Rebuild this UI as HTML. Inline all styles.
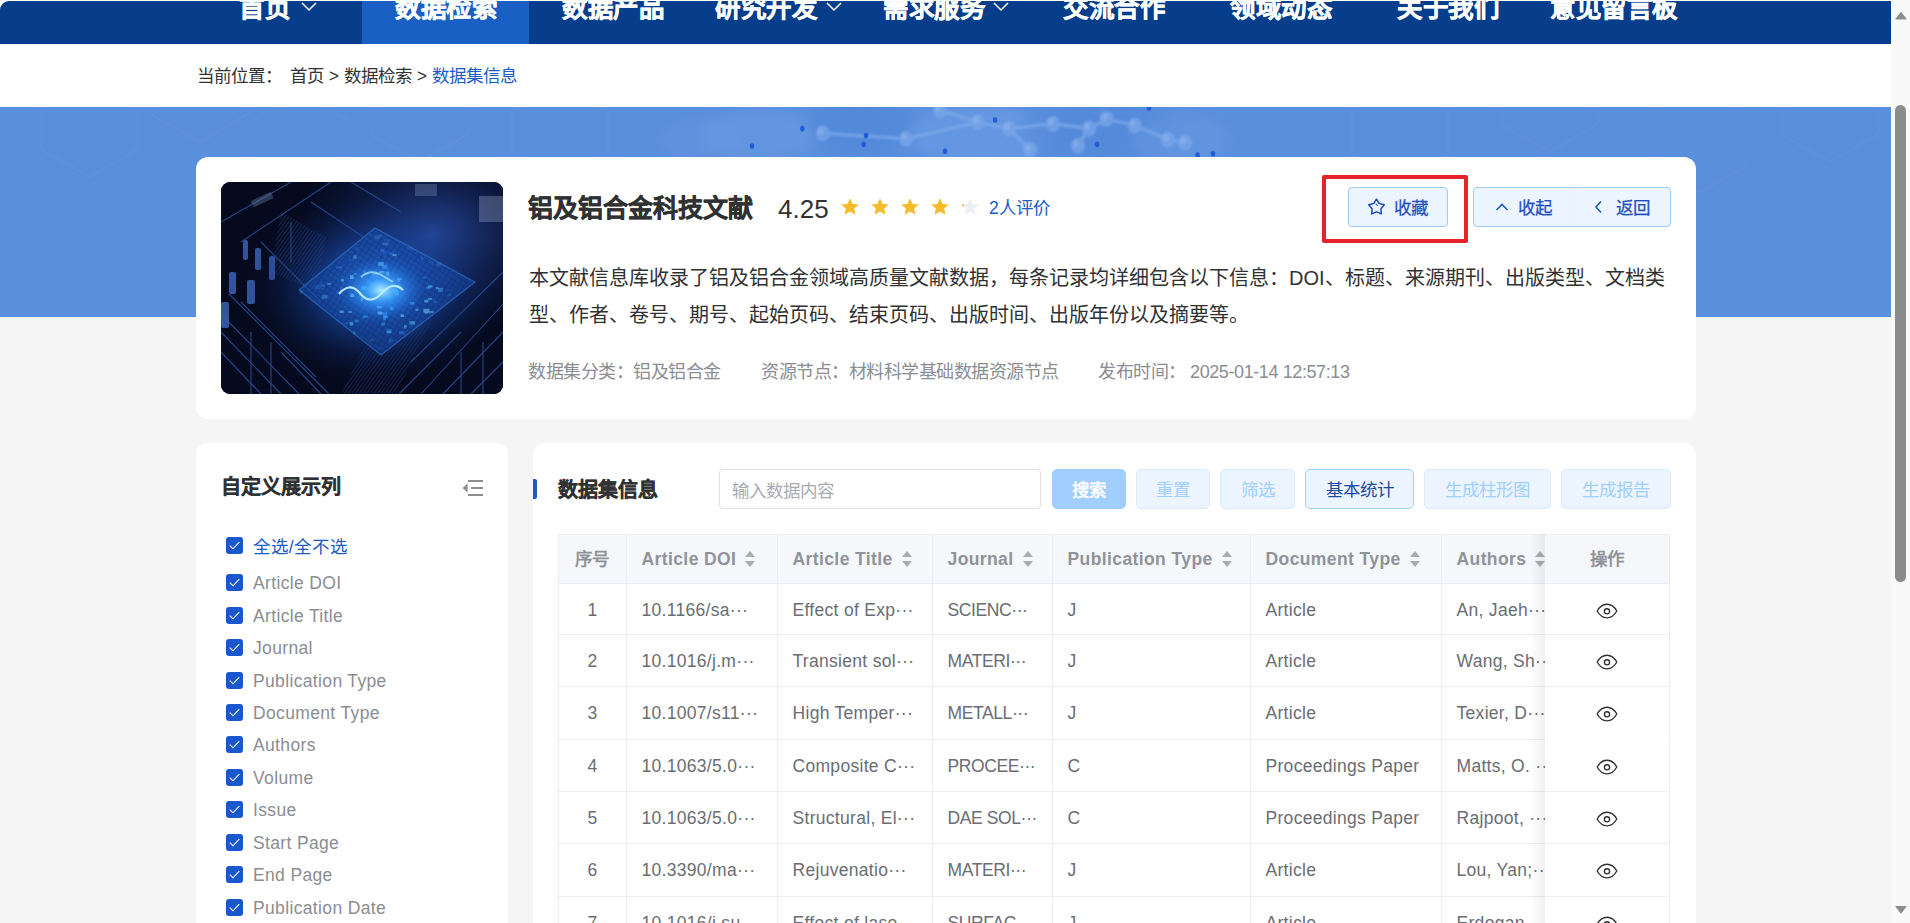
<!DOCTYPE html>
<html lang="zh-CN">
<head>
<meta charset="utf-8">
<style>
*{box-sizing:border-box;margin:0;padding:0}
html,body{width:1910px;height:923px;overflow:hidden;background:#f5f5f5;font-family:"Liberation Sans",sans-serif}
.abs{position:absolute}
#nav{left:0;top:1px;width:1891px;height:43px;background:#073e8c;border-top-left-radius:9px;overflow:hidden}
.ni{position:absolute;top:-13px;height:40px;line-height:40px;color:#fff;font-size:25.5px;letter-spacing:-0.5px;font-weight:bold;-webkit-text-stroke:0.45px #fff;white-space:nowrap}
.chev{position:absolute;top:1px;width:16px;height:10px}
#crumb{left:0;top:44px;width:1891px;height:63px;background:#fff}
#crumb .t{position:absolute;left:197px;top:21px;font-size:17.5px;line-height:22px;color:#333;white-space:nowrap}
#banner{left:0;top:107px;width:1891px;height:210px;background:#5a8fdc;overflow:hidden}
#card{left:196px;top:157px;width:1500px;height:262px;background:#fff;border-radius:12px}
#thumb{left:221px;top:182px;width:282px;height:212px;border-radius:9px;overflow:hidden;background:#050c22}
.title{left:528px;top:190.5px;font-size:25px;font-weight:bold;color:#303133;-webkit-text-stroke:0.4px #303133;line-height:34px;white-space:nowrap}
.score{left:778px;top:193.5px;font-size:26px;color:#303133;line-height:30px}
.star{position:absolute;top:197px;width:20px;height:20px}
.rev{left:989px;top:197px;font-size:17.5px;color:#1a5bc4;line-height:22px;white-space:nowrap}
#redbox{left:1322px;top:175px;width:146px;height:68px;border:4px solid #e6212a;border-radius:2px}
.btn{position:absolute;height:40px;border:1px solid #a3c9f5;background:#ecf5ff;border-radius:4px;color:#1d50bd;font-size:17.5px;line-height:40px;-webkit-text-stroke:0.25px #1d50bd;white-space:nowrap}
.desc{left:529px;top:259.5px;width:1150px;font-size:20px;line-height:37px;color:#303133}
.meta{position:absolute;top:360.5px;font-size:18px;letter-spacing:-0.5px;line-height:22px;color:#8a8d93;white-space:nowrap}
#lp{left:196px;top:443px;width:312px;height:520px;background:#fff;border-radius:12px}
#rp{left:533px;top:443px;width:1163px;height:520px;background:#fff;border-radius:12px}
.h2{position:absolute;font-size:20px;font-weight:bold;color:#303133;-webkit-text-stroke:0.3px #303133;line-height:26px;white-space:nowrap}
.cb{position:absolute;left:226px;width:17px;height:17px;background:#1858cc;border-radius:3px}
.cb svg{position:absolute;left:0;top:0}
.cl{position:absolute;left:253px;font-size:17.5px;line-height:23.4px;letter-spacing:0.35px;color:#8a8d93;white-space:nowrap}

.th{position:absolute;padding-left:14.5px;font-size:17.5px;font-weight:bold;color:#909399;line-height:50px;letter-spacing:0.4px;white-space:nowrap;border-left:1px solid #ebeef5}
.sort{display:inline-block;position:relative;width:11px;height:16px;margin-left:9px;vertical-align:-2px}
.sort:before{content:"";position:absolute;left:0;top:0;border-left:5.5px solid transparent;border-right:5.5px solid transparent;border-bottom:6px solid #a8abb2}
.sort:after{content:"";position:absolute;left:0;bottom:0;border-left:5.5px solid transparent;border-right:5.5px solid transparent;border-top:6px solid #a8abb2}
.td{position:absolute;padding-left:14.5px;font-size:17.5px;color:#6a6d73;line-height:52.5px;letter-spacing:0.3px;white-space:nowrap;overflow:hidden;border-left:1px solid #ebeef5;border-bottom:1px solid #ebeef5}
.tdf{position:absolute;left:1545px;width:125px;background:#fff;border-bottom:1px solid #ebeef5;border-right:1px solid #ebeef5;text-align:center;padding-top:19px}
.tdf svg{display:inline-block}
.tb{position:absolute;top:469px;height:40px;border:1px solid #d9ecff;background:#ecf5ff;border-radius:5px;font-size:17.5px;line-height:40px;text-align:center;white-space:nowrap}
#sb{left:1891px;top:0;width:19px;height:923px;background:#f9f9f9}
</style>
</head>
<body>
<div class="abs" style="left:0;top:0;width:1891px;height:44px;background:#fff"></div>
<!-- NAV -->
<div id="nav" class="abs">
  <div class="abs" style="left:362px;top:0;width:167px;height:43px;background:#1a5fc3"></div>
  <div class="ni" style="left:239px">首页</div>
  <svg class="chev" style="left:301px" viewBox="0 0 16 10"><path d="M1 1 L8 8 L15 1" fill="none" stroke="#fff" stroke-width="1.5"/></svg>
  <div class="ni" style="left:395px">数据检索</div>
  <div class="ni" style="left:562px">数据产品</div>
  <div class="ni" style="left:715px">研究开发</div>
  <svg class="chev" style="left:826px" viewBox="0 0 16 10"><path d="M1 1 L8 8 L15 1" fill="none" stroke="#fff" stroke-width="1.5"/></svg>
  <div class="ni" style="left:883px">需求服务</div>
  <svg class="chev" style="left:993px" viewBox="0 0 16 10"><path d="M1 1 L8 8 L15 1" fill="none" stroke="#fff" stroke-width="1.5"/></svg>
  <div class="ni" style="left:1063px">交流合作</div>
  <div class="ni" style="left:1230px">领域动态</div>
  <div class="ni" style="left:1397px">关于我们</div>
  <div class="ni" style="left:1550px">意见留言板</div>
</div>
<!-- CRUMB -->
<div id="crumb" class="abs"><div class="t">当前位置：<span style="display:inline-block;width:8px"></span>首页 &gt; 数据检索 &gt; <span style="color:#1a5bc4">数据集信息</span></div></div>
<!-- BANNER -->
<div id="banner" class="abs"><svg class="abs" style="left:0;top:0" width="1891" height="210" viewBox="0 0 1891 210"><defs><filter id="bl" x="-50%" y="-50%" width="200%" height="200%"><feGaussianBlur stdDeviation="6"/></filter><filter id="bl2"><feGaussianBlur stdDeviation="0.8"/></filter></defs><ellipse cx="760" cy="28" rx="60" ry="25" fill="#6b9ce4" opacity="0.5" filter="url(#bl)"/><ellipse cx="860" cy="18" rx="50" ry="30" fill="#4d84d8" opacity="0.5" filter="url(#bl)"/><ellipse cx="980" cy="28" rx="70" ry="30" fill="#72a2e8" opacity="0.45" filter="url(#bl)"/><ellipse cx="1100" cy="23" rx="80" ry="30" fill="#4f86d9" opacity="0.45" filter="url(#bl)"/><ellipse cx="1180" cy="33" rx="50" ry="25" fill="#6d9de5" opacity="0.4" filter="url(#bl)"/><ellipse cx="700" cy="33" rx="40" ry="20" fill="#6a9ae3" opacity="0.35" filter="url(#bl)"/><polygon points="138,42 90,70 42,43 42,-12 90,-40 138,-12" fill="none" stroke="#7aa3e6" stroke-width="1" opacity="0.3"/><polygon points="248,7 200,35 152,8 152,-47 200,-75 248,-47" fill="none" stroke="#7aa3e6" stroke-width="1" opacity="0.3"/><polygon points="348,68 300,95 252,68 252,13 300,-15 348,13" fill="none" stroke="#7aa3e6" stroke-width="1" opacity="0.3"/><polygon points="468,27 420,55 372,28 372,-27 420,-55 468,-27" fill="none" stroke="#7aa3e6" stroke-width="1" opacity="0.3"/><polygon points="608,58 560,85 512,58 512,3 560,-25 608,3" fill="none" stroke="#7aa3e6" stroke-width="1" opacity="0.3"/><polygon points="1448,48 1400,75 1352,48 1352,-7 1400,-35 1448,-7" fill="none" stroke="#7aa3e6" stroke-width="1" opacity="0.3"/><polygon points="1598,17 1550,45 1502,18 1502,-37 1550,-65 1598,-37" fill="none" stroke="#7aa3e6" stroke-width="1" opacity="0.3"/><polygon points="1748,58 1700,85 1652,58 1652,3 1700,-25 1748,3" fill="none" stroke="#7aa3e6" stroke-width="1" opacity="0.3"/><polygon points="1878,27 1830,55 1782,28 1782,-27 1830,-55 1878,-27" fill="none" stroke="#7aa3e6" stroke-width="1" opacity="0.3"/><g opacity="0.75" filter="url(#bl2)"><line x1="822.8" y1="26.30000000000001" x2="906" y2="31.80000000000001" stroke="#7ba8ea" stroke-width="3.5"/><line x1="906" y1="31.80000000000001" x2="977.7" y2="15.299999999999997" stroke="#7ba8ea" stroke-width="3.5"/><line x1="977.7" y1="15.299999999999997" x2="1009" y2="21.599999999999994" stroke="#7ba8ea" stroke-width="3.5"/><line x1="1009" y1="21.599999999999994" x2="1053" y2="16.799999999999997" stroke="#7ba8ea" stroke-width="3.5"/><line x1="1053" y1="16.799999999999997" x2="1089" y2="21.599999999999994" stroke="#7ba8ea" stroke-width="3.5"/><line x1="1089" y1="21.599999999999994" x2="1106.5" y2="12" stroke="#7ba8ea" stroke-width="3.5"/><line x1="1106.5" y1="12" x2="1134.8" y2="18.400000000000006" stroke="#7ba8ea" stroke-width="3.5"/><line x1="1134.8" y1="18.400000000000006" x2="1167.7" y2="32.599999999999994" stroke="#7ba8ea" stroke-width="3.5"/><line x1="1167.7" y1="32.599999999999994" x2="1185" y2="35.69999999999999" stroke="#7ba8ea" stroke-width="3.5"/><line x1="1089" y1="21.599999999999994" x2="1078" y2="38.80000000000001" stroke="#7ba8ea" stroke-width="3.5"/><line x1="977.7" y1="15.299999999999997" x2="940" y2="3" stroke="#7ba8ea" stroke-width="3.5"/><line x1="1009" y1="21.599999999999994" x2="1030" y2="43" stroke="#7ba8ea" stroke-width="3.5"/><ellipse cx="822.8" cy="26.30000000000001" rx="7" ry="8" fill="#79a6ea"/><ellipse cx="820.8" cy="24.30000000000001" rx="3" ry="3.5" fill="#8fb6ef"/><ellipse cx="906" cy="31.80000000000001" rx="7" ry="8" fill="#79a6ea"/><ellipse cx="904" cy="29.80000000000001" rx="3" ry="3.5" fill="#8fb6ef"/><ellipse cx="977.7" cy="15.299999999999997" rx="7" ry="8" fill="#79a6ea"/><ellipse cx="975.7" cy="13.299999999999997" rx="3" ry="3.5" fill="#8fb6ef"/><ellipse cx="1009" cy="21.599999999999994" rx="7" ry="8" fill="#79a6ea"/><ellipse cx="1007" cy="19.599999999999994" rx="3" ry="3.5" fill="#8fb6ef"/><ellipse cx="1053" cy="16.799999999999997" rx="7" ry="8" fill="#79a6ea"/><ellipse cx="1051" cy="14.799999999999997" rx="3" ry="3.5" fill="#8fb6ef"/><ellipse cx="1089" cy="21.599999999999994" rx="7" ry="8" fill="#79a6ea"/><ellipse cx="1087" cy="19.599999999999994" rx="3" ry="3.5" fill="#8fb6ef"/><ellipse cx="1106.5" cy="12" rx="7" ry="8" fill="#79a6ea"/><ellipse cx="1104.5" cy="10" rx="3" ry="3.5" fill="#8fb6ef"/><ellipse cx="1134.8" cy="18.400000000000006" rx="7" ry="8" fill="#79a6ea"/><ellipse cx="1132.8" cy="16.400000000000006" rx="3" ry="3.5" fill="#8fb6ef"/><ellipse cx="1167.7" cy="32.599999999999994" rx="7" ry="8" fill="#79a6ea"/><ellipse cx="1165.7" cy="30.599999999999994" rx="3" ry="3.5" fill="#8fb6ef"/><ellipse cx="1185" cy="35.69999999999999" rx="7" ry="8" fill="#79a6ea"/><ellipse cx="1183" cy="33.69999999999999" rx="3" ry="3.5" fill="#8fb6ef"/><ellipse cx="1078" cy="38.80000000000001" rx="7" ry="8" fill="#79a6ea"/><ellipse cx="1076" cy="36.80000000000001" rx="3" ry="3.5" fill="#8fb6ef"/><ellipse cx="940" cy="3" rx="7" ry="8" fill="#79a6ea"/><ellipse cx="938" cy="1" rx="3" ry="3.5" fill="#8fb6ef"/><ellipse cx="1030" cy="43" rx="7" ry="8" fill="#79a6ea"/><ellipse cx="1028" cy="41" rx="3" ry="3.5" fill="#8fb6ef"/></g><ellipse cx="802.3" cy="21.599999999999994" rx="2.2" ry="2.8" fill="#1f5bd6"/><ellipse cx="752" cy="39" rx="2.2" ry="2.8" fill="#1f5bd6"/><ellipse cx="866" cy="28.599999999999994" rx="2.2" ry="2.8" fill="#1f5bd6"/><ellipse cx="863.6" cy="37.30000000000001" rx="2.2" ry="2.8" fill="#1f5bd6"/><ellipse cx="945" cy="44.30000000000001" rx="2.2" ry="2.8" fill="#1f5bd6"/><ellipse cx="995" cy="13" rx="2.2" ry="2.8" fill="#1f5bd6"/><ellipse cx="1097" cy="37.30000000000001" rx="2.2" ry="2.8" fill="#1f5bd6"/><ellipse cx="1149" cy="1" rx="2.2" ry="2.8" fill="#1f5bd6"/><ellipse cx="1213" cy="46.69999999999999" rx="2.2" ry="2.8" fill="#1f5bd6"/><ellipse cx="1197.6" cy="48" rx="2.2" ry="2.8" fill="#1f5bd6"/></svg></div>
<!-- CARD -->
<div id="card" class="abs"></div>
<div id="thumb" class="abs"><svg width="282" height="212" viewBox="0 0 282 212">
<defs>
<radialGradient id="g1" cx="0.55" cy="0.5" r="0.45"><stop offset="0" stop-color="#2f90f2" stop-opacity="0.95"/><stop offset="0.45" stop-color="#1a4cae" stop-opacity="0.6"/><stop offset="1" stop-color="#0a1a4a" stop-opacity="0"/></radialGradient>
<radialGradient id="g2" cx="0.75" cy="0.25" r="0.5"><stop offset="0" stop-color="#2a4ea6" stop-opacity="0.95"/><stop offset="1" stop-color="#0a1a4a" stop-opacity="0"/></radialGradient>
<radialGradient id="g3" cx="0.5" cy="0.5" r="0.5"><stop offset="0" stop-color="#a8ecff"/><stop offset="0.35" stop-color="#3aa0ff" stop-opacity="0.85"/><stop offset="1" stop-color="#1a5fd0" stop-opacity="0"/></radialGradient>
<pattern id="pt" width="5" height="5" patternUnits="userSpaceOnUse" patternTransform="rotate(33)"><path d="M0 0 H5 M0 0 V5" stroke="#0a2260" stroke-width="1.1"/></pattern>
<pattern id="pl" width="3" height="3" patternUnits="userSpaceOnUse" patternTransform="rotate(-55)"><path d="M0 0 H3" stroke="#3c64b8" stroke-width="0.9"/></pattern>
<filter id="tb"><feGaussianBlur stdDeviation="0.6"/></filter>
</defs>
<rect width="282" height="212" fill="#050a1e"/>
<rect width="282" height="212" fill="url(#g2)"/>
<g stroke="#2e55a0" stroke-width="1.1" opacity="0.8" filter="url(#tb)">
<path d="M0 150 L60 212 M0 132 L78 212 M0 170 L40 212 M8 112 L108 212 M40 60 L100 120 M60 170 L100 212 M20 120 L95 195"/>
<path d="M200 212 L282 122 M222 212 L282 150 M178 212 L240 150 M250 212 L282 180 M190 180 L282 90"/>
<path d="M0 40 L70 0 M20 60 L110 0 M130 0 L180 30 M90 20 L150 60"/>
<path d="M30 212 L30 150 M50 212 L50 160 M240 212 L240 170 M262 212 L262 160 M70 80 L70 40"/>
</g>
<polygon points="60,30 105,55 95,110 50,90" fill="url(#pl)" opacity="0.7"/>
<polygon points="150,150 210,140 175,212 120,212" fill="url(#pl)" opacity="0.6"/>
<g fill="#3a62b4" opacity="0.85"><rect x="22" y="58" width="5" height="20" rx="2"/><rect x="34" y="66" width="6" height="22" rx="2"/><rect x="48" y="74" width="6" height="24" rx="2"/><rect x="8" y="90" width="7" height="22" rx="2"/><rect x="26" y="98" width="8" height="24" rx="2"/><rect x="0" y="120" width="8" height="26" rx="2"/></g>
<g fill="#7d8fb3" opacity="0.35"><rect x="30" y="14" width="22" height="7" transform="rotate(-25 41 17)"/><rect x="194" y="2" width="22" height="12"/></g>
<rect x="258" y="14" width="24" height="26" fill="#8796b8" opacity="0.4"/>
<rect width="282" height="212" fill="url(#g1)"/>
<polygon points="154,46 254,100 160,173 78,108" fill="#1a56bf" opacity="0.45"/>
<polygon points="154,46 254,100 160,173 78,108" fill="url(#pt)" opacity="0.55"/>
<polygon points="154,46 254,100 160,173 78,108" fill="none" stroke="#3d8ae0" stroke-width="1.2" opacity="0.5"/>
<g><rect x="135.0" y="65.2" width="2.3" height="2.8" fill="#3b9cff" opacity="0.25"/><rect x="154.3" y="54.9" width="4.2" height="1.6" fill="#3b9cff" opacity="0.15"/><rect x="189.0" y="120.0" width="4.3" height="2.5" fill="#3b9cff" opacity="0.72"/><rect x="132.3" y="149.6" width="2.4" height="2.9" fill="#5ec4ff" opacity="0.26"/><rect x="203.3" y="117.7" width="4.0" height="2.8" fill="#5ec4ff" opacity="0.56"/><rect x="214.8" y="105.1" width="3.4" height="2.1" fill="#7fd6ff" opacity="0.40"/><rect x="165.1" y="89.6" width="3.2" height="4.0" fill="#7fd6ff" opacity="0.80"/><rect x="98.8" y="99.1" width="2.6" height="2.7" fill="#2a78e0" opacity="0.25"/><rect x="212.6" y="118.8" width="3.4" height="2.4" fill="#2a78e0" opacity="0.41"/><rect x="165.4" y="147.2" width="5.4" height="3.9" fill="#3b9cff" opacity="0.44"/><rect x="161.4" y="130.3" width="4.9" height="2.3" fill="#3b9cff" opacity="0.75"/><rect x="179.7" y="132.5" width="3.1" height="2.5" fill="#7fd6ff" opacity="0.66"/><rect x="159.3" y="67.3" width="4.0" height="2.0" fill="#3b9cff" opacity="0.41"/><rect x="128.6" y="139.8" width="3.6" height="3.7" fill="#7fd6ff" opacity="0.44"/><rect x="92.2" y="103.0" width="5.5" height="3.5" fill="#2a78e0" opacity="0.15"/><rect x="151.1" y="91.6" width="5.8" height="1.9" fill="#7fd6ff" opacity="0.81"/><rect x="119.1" y="107.6" width="3.1" height="1.5" fill="#5ec4ff" opacity="0.62"/><rect x="151.7" y="92.9" width="5.8" height="3.2" fill="#2a78e0" opacity="0.82"/><rect x="168.7" y="124.4" width="3.8" height="3.7" fill="#3b9cff" opacity="0.81"/><rect x="176.4" y="96.6" width="2.4" height="3.1" fill="#7fd6ff" opacity="0.82"/><rect x="186.1" y="64.9" width="5.8" height="3.0" fill="#2a78e0" opacity="0.24"/><rect x="161.5" y="60.6" width="6.0" height="2.7" fill="#7fd6ff" opacity="0.24"/><rect x="163.2" y="56.9" width="5.0" height="3.4" fill="#3b9cff" opacity="0.15"/><rect x="162.2" y="133.9" width="2.8" height="3.9" fill="#3b9cff" opacity="0.70"/><rect x="141.7" y="133.6" width="5.0" height="2.2" fill="#3b9cff" opacity="0.65"/><rect x="226.8" y="111.8" width="3.4" height="2.1" fill="#5ec4ff" opacity="0.15"/><rect x="173.3" y="109.8" width="4.5" height="3.5" fill="#5ec4ff" opacity="0.87"/><rect x="120.1" y="96.9" width="2.8" height="2.7" fill="#5ec4ff" opacity="0.60"/><rect x="217.1" y="106.0" width="4.8" height="3.9" fill="#5ec4ff" opacity="0.36"/><rect x="156.7" y="165.0" width="5.8" height="2.4" fill="#2a78e0" opacity="0.15"/><rect x="225.9" y="106.9" width="5.2" height="1.7" fill="#2a78e0" opacity="0.18"/><rect x="162.1" y="68.7" width="2.3" height="3.9" fill="#2a78e0" opacity="0.44"/><rect x="205.0" y="104.8" width="4.9" height="1.9" fill="#3b9cff" opacity="0.56"/><rect x="139.7" y="115.7" width="2.1" height="3.5" fill="#5ec4ff" opacity="0.81"/><rect x="115.4" y="109.6" width="3.0" height="2.5" fill="#2a78e0" opacity="0.57"/><rect x="140.3" y="104.2" width="5.3" height="3.7" fill="#7fd6ff" opacity="0.83"/><rect x="167.9" y="156.8" width="4.4" height="3.4" fill="#5ec4ff" opacity="0.18"/><rect x="171.4" y="107.3" width="5.5" height="1.6" fill="#3b9cff" opacity="0.88"/><rect x="95.2" y="103.4" width="5.0" height="3.8" fill="#3b9cff" opacity="0.19"/><rect x="156.0" y="123.8" width="4.8" height="2.6" fill="#5ec4ff" opacity="0.82"/><rect x="171.9" y="106.7" width="4.8" height="3.7" fill="#5ec4ff" opacity="0.88"/><rect x="99.4" y="102.1" width="4.7" height="2.6" fill="#3b9cff" opacity="0.28"/><rect x="115.4" y="84.5" width="5.6" height="1.9" fill="#3b9cff" opacity="0.40"/><rect x="204.0" y="129.9" width="3.0" height="1.8" fill="#5ec4ff" opacity="0.44"/><rect x="160.3" y="140.8" width="3.6" height="2.7" fill="#3b9cff" opacity="0.58"/><rect x="106.4" y="100.8" width="3.4" height="2.0" fill="#7fd6ff" opacity="0.41"/><rect x="134.1" y="137.7" width="3.4" height="2.6" fill="#3b9cff" opacity="0.53"/><rect x="201.8" y="94.8" width="4.0" height="1.7" fill="#2a78e0" opacity="0.56"/><rect x="215.1" y="80.3" width="5.3" height="3.6" fill="#5ec4ff" opacity="0.17"/><rect x="149.4" y="114.1" width="4.8" height="1.7" fill="#7fd6ff" opacity="0.87"/><rect x="152.9" y="55.2" width="4.5" height="3.5" fill="#3b9cff" opacity="0.15"/><rect x="157.9" y="89.1" width="5.7" height="2.2" fill="#7fd6ff" opacity="0.79"/><rect x="100.7" y="112.9" width="5.8" height="3.9" fill="#5ec4ff" opacity="0.31"/><rect x="171.5" y="72.1" width="4.0" height="1.9" fill="#7fd6ff" opacity="0.50"/><rect x="207.0" y="116.0" width="4.1" height="2.1" fill="#5ec4ff" opacity="0.51"/><rect x="156.7" y="129.6" width="4.6" height="2.9" fill="#7fd6ff" opacity="0.76"/><rect x="132.2" y="73.3" width="3.4" height="3.6" fill="#5ec4ff" opacity="0.41"/><rect x="202.4" y="126.8" width="6.0" height="4.0" fill="#7fd6ff" opacity="0.50"/><rect x="153.8" y="53.0" width="5.5" height="3.2" fill="#7fd6ff" opacity="0.15"/><rect x="127.6" y="76.8" width="2.2" height="2.0" fill="#2a78e0" opacity="0.44"/><rect x="142.1" y="87.8" width="3.0" height="3.9" fill="#2a78e0" opacity="0.73"/><rect x="132.5" y="91.3" width="3.3" height="1.7" fill="#3b9cff" opacity="0.69"/><rect x="127.1" y="129.3" width="4.0" height="1.5" fill="#5ec4ff" opacity="0.58"/><rect x="148.3" y="51.3" width="3.2" height="3.1" fill="#3b9cff" opacity="0.15"/><rect x="183.0" y="143.1" width="2.6" height="3.3" fill="#7fd6ff" opacity="0.45"/><rect x="188.4" y="139.2" width="5.6" height="3.4" fill="#5ec4ff" opacity="0.48"/><rect x="178.1" y="149.2" width="5.3" height="3.0" fill="#3b9cff" opacity="0.34"/><rect x="200.0" y="75.2" width="2.2" height="3.1" fill="#3b9cff" opacity="0.31"/><rect x="157.4" y="52.4" width="4.5" height="3.2" fill="#3b9cff" opacity="0.15"/><rect x="166.5" y="114.0" width="5.0" height="2.7" fill="#3b9cff" opacity="0.88"/><rect x="118.6" y="128.5" width="4.0" height="2.5" fill="#7fd6ff" opacity="0.49"/><rect x="162.3" y="132.8" width="4.5" height="3.1" fill="#3b9cff" opacity="0.72"/><rect x="122.7" y="140.4" width="4.5" height="1.8" fill="#2a78e0" opacity="0.36"/><rect x="162.9" y="107.7" width="4.8" height="3.2" fill="#3b9cff" opacity="0.90"/><rect x="129.2" y="111.6" width="3.9" height="3.4" fill="#7fd6ff" opacity="0.74"/><rect x="161.2" y="82.8" width="5.3" height="3.9" fill="#3b9cff" opacity="0.71"/><rect x="157.1" y="80.1" width="5.7" height="3.8" fill="#5ec4ff" opacity="0.67"/><rect x="209.6" y="79.2" width="2.5" height="3.6" fill="#2a78e0" opacity="0.25"/><rect x="167.5" y="158.6" width="2.9" height="3.7" fill="#2a78e0" opacity="0.15"/><rect x="78.6" y="108.4" width="3.6" height="3.3" fill="#7fd6ff" opacity="0.15"/><rect x="151.2" y="93.8" width="5.4" height="1.5" fill="#3b9cff" opacity="0.83"/><rect x="129.0" y="93.3" width="3.6" height="3.7" fill="#7fd6ff" opacity="0.68"/><rect x="194.5" y="126.6" width="3.0" height="2.2" fill="#5ec4ff" opacity="0.60"/><rect x="167.9" y="70.1" width="5.1" height="2.6" fill="#2a78e0" opacity="0.46"/><rect x="148.4" y="157.2" width="4.9" height="1.6" fill="#5ec4ff" opacity="0.16"/><rect x="206.9" y="103.3" width="4.6" height="2.2" fill="#5ec4ff" opacity="0.53"/><rect x="100.4" y="106.0" width="3.1" height="2.1" fill="#2a78e0" opacity="0.31"/><rect x="208.0" y="128.9" width="4.6" height="2.3" fill="#7fd6ff" opacity="0.39"/><rect x="176.1" y="96.1" width="4.6" height="1.7" fill="#5ec4ff" opacity="0.81"/><rect x="166.1" y="149.1" width="3.8" height="2.3" fill="#5ec4ff" opacity="0.39"/></g><ellipse cx="160" cy="108" rx="44" ry="32" fill="url(#g3)"/>
<path d="M118 112 Q128 100 138 110 Q148 124 160 112 Q172 98 182 108" fill="none" stroke="#c4f2ff" stroke-width="2.2" opacity="0.9"/>
<path d="M140 95 Q150 86 162 94 L172 100" fill="none" stroke="#aee8ff" stroke-width="1.8" opacity="0.75"/>
</svg></div>
<div class="abs title">铝及铝合金科技文献</div>
<div class="abs score">4.25</div>
<svg class="star" style="left:840px" viewBox="0 0 20 20"><path d="M10 1.2 L12.6 6.9 L18.8 7.5 L14.1 11.6 L15.5 17.7 L10 14.5 L4.5 17.7 L5.9 11.6 L1.2 7.5 L7.4 6.9 Z" fill="#f7ba2a"/></svg><svg class="star" style="left:870px" viewBox="0 0 20 20"><path d="M10 1.2 L12.6 6.9 L18.8 7.5 L14.1 11.6 L15.5 17.7 L10 14.5 L4.5 17.7 L5.9 11.6 L1.2 7.5 L7.4 6.9 Z" fill="#f7ba2a"/></svg><svg class="star" style="left:900px" viewBox="0 0 20 20"><path d="M10 1.2 L12.6 6.9 L18.8 7.5 L14.1 11.6 L15.5 17.7 L10 14.5 L4.5 17.7 L5.9 11.6 L1.2 7.5 L7.4 6.9 Z" fill="#f7ba2a"/></svg><svg class="star" style="left:930px" viewBox="0 0 20 20"><path d="M10 1.2 L12.6 6.9 L18.8 7.5 L14.1 11.6 L15.5 17.7 L10 14.5 L4.5 17.7 L5.9 11.6 L1.2 7.5 L7.4 6.9 Z" fill="#f7ba2a"/></svg><svg class="star" style="left:960px" viewBox="0 0 20 20"><defs><clipPath id="cp"><rect x="0" y="0" width="4" height="20"/></clipPath></defs><path d="M10 1.2 L12.6 6.9 L18.8 7.5 L14.1 11.6 L15.5 17.7 L10 14.5 L4.5 17.7 L5.9 11.6 L1.2 7.5 L7.4 6.9 Z" fill="#eceff4"/><path clip-path="url(#cp)" d="M10 1.2 L12.6 6.9 L18.8 7.5 L14.1 11.6 L15.5 17.7 L10 14.5 L4.5 17.7 L5.9 11.6 L1.2 7.5 L7.4 6.9 Z" fill="#f7ba2a"/></svg>
<div class="abs rev">2人评价</div>
<div id="redbox" class="abs"></div>
<div class="btn" style="left:1348px;top:187px;width:100px"><svg class="abs" style="left:18px;top:9px" width="19" height="19" viewBox="0 0 20 20"><path d="M10.00 2.20 L12.88 6.84 L18.18 8.14 L14.66 12.31 L15.05 17.76 L10.00 15.70 L4.95 17.76 L5.34 12.31 L1.82 8.14 L7.12 6.84 Z" fill="none" stroke="#1d50bd" stroke-width="1.6" stroke-linejoin="round"/><path d="M9.6 7.6 L11 9" stroke="#1d50bd" stroke-width="1.1" stroke-linecap="round"/></svg><span class="abs" style="left:45px;top:0">收藏</span></div>
<div class="btn" style="left:1473px;top:187px;width:198px"><div class="abs" style="left:100px;top:0;width:1px;height:38px;background:#e8f2fd"></div><svg class="abs" style="left:21px;top:14px" width="14" height="10" viewBox="0 0 14 10"><path d="M1.5 8 L7 2.5 L12.5 8" fill="none" stroke="#1a5bc4" stroke-width="1.6"/></svg><span class="abs" style="left:44px;top:0">收起</span><svg class="abs" style="left:120px;top:12px" width="9" height="14" viewBox="0 0 9 14"><path d="M7 1.5 L2 7 L7 12.5" fill="none" stroke="#1a5bc4" stroke-width="1.6"/></svg><span class="abs" style="left:142px;top:0">返回</span></div>
<div class="abs desc">本文献信息库收录了铝及铝合金领域高质量文献数据，每条记录均详细包含以下信息：DOI、标题、来源期刊、出版类型、文档类型、作者、卷号、期号、起始页码、结束页码、出版时间、出版年份以及摘要等。</div>
<div class="meta" style="left:528px">数据集分类：铝及铝合金</div>
<div class="meta" style="left:761px">资源节点：材料科学基础数据资源节点</div>
<div class="meta" style="left:1098px">发布时间：&nbsp;<span style="letter-spacing:-0.4px">2025-01-14 12:57:13</span></div>
<!-- LEFT PANEL -->
<div id="lp" class="abs"></div>
<div class="h2" style="left:220.5px;top:473.5px">自定义展示列</div>
<svg class="abs" style="left:462px;top:480px" width="22" height="17" viewBox="0 0 22 17"><path d="M6 1 H21 M9 8 H21 M6 15 H21" stroke="#8f8f8f" stroke-width="1.8"/><path d="M0.6 8 L5.6 3.2 V12.8 Z" fill="#8f8f8f"/></svg>
<div class="cb" style="top:537px"><svg width="17" height="17" viewBox="0 0 17 17"><path d="M3.8 8.6 L7 11.8 L13.3 5.2" fill="none" stroke="#fff" stroke-width="1.1"/></svg></div><div class="cl" style="top:535.7px;color:#1a5bc4;letter-spacing:0.85px">全选/全不选</div>
<div class="cb" style="top:574.1px"><svg width="17" height="17" viewBox="0 0 17 17"><path d="M3.8 8.6 L7 11.8 L13.3 5.2" fill="none" stroke="#fff" stroke-width="1.1"/></svg></div><div class="cl" style="top:572.1px">Article DOI</div>
<div class="cb" style="top:606.6px"><svg width="17" height="17" viewBox="0 0 17 17"><path d="M3.8 8.6 L7 11.8 L13.3 5.2" fill="none" stroke="#fff" stroke-width="1.1"/></svg></div><div class="cl" style="top:604.6px">Article Title</div>
<div class="cb" style="top:639.0px"><svg width="17" height="17" viewBox="0 0 17 17"><path d="M3.8 8.6 L7 11.8 L13.3 5.2" fill="none" stroke="#fff" stroke-width="1.1"/></svg></div><div class="cl" style="top:637.0px">Journal</div>
<div class="cb" style="top:671.5px"><svg width="17" height="17" viewBox="0 0 17 17"><path d="M3.8 8.6 L7 11.8 L13.3 5.2" fill="none" stroke="#fff" stroke-width="1.1"/></svg></div><div class="cl" style="top:669.5px">Publication Type</div>
<div class="cb" style="top:703.9px"><svg width="17" height="17" viewBox="0 0 17 17"><path d="M3.8 8.6 L7 11.8 L13.3 5.2" fill="none" stroke="#fff" stroke-width="1.1"/></svg></div><div class="cl" style="top:701.9px">Document Type</div>
<div class="cb" style="top:736.4px"><svg width="17" height="17" viewBox="0 0 17 17"><path d="M3.8 8.6 L7 11.8 L13.3 5.2" fill="none" stroke="#fff" stroke-width="1.1"/></svg></div><div class="cl" style="top:734.4px">Authors</div>
<div class="cb" style="top:768.8px"><svg width="17" height="17" viewBox="0 0 17 17"><path d="M3.8 8.6 L7 11.8 L13.3 5.2" fill="none" stroke="#fff" stroke-width="1.1"/></svg></div><div class="cl" style="top:766.8px">Volume</div>
<div class="cb" style="top:801.2px"><svg width="17" height="17" viewBox="0 0 17 17"><path d="M3.8 8.6 L7 11.8 L13.3 5.2" fill="none" stroke="#fff" stroke-width="1.1"/></svg></div><div class="cl" style="top:799.2px">Issue</div>
<div class="cb" style="top:833.7px"><svg width="17" height="17" viewBox="0 0 17 17"><path d="M3.8 8.6 L7 11.8 L13.3 5.2" fill="none" stroke="#fff" stroke-width="1.1"/></svg></div><div class="cl" style="top:831.7px">Start Page</div>
<div class="cb" style="top:866.2px"><svg width="17" height="17" viewBox="0 0 17 17"><path d="M3.8 8.6 L7 11.8 L13.3 5.2" fill="none" stroke="#fff" stroke-width="1.1"/></svg></div><div class="cl" style="top:864.2px">End Page</div>
<div class="cb" style="top:898.6px"><svg width="17" height="17" viewBox="0 0 17 17"><path d="M3.8 8.6 L7 11.8 L13.3 5.2" fill="none" stroke="#fff" stroke-width="1.1"/></svg></div><div class="cl" style="top:896.6px">Publication Date</div>
<!-- RIGHT PANEL -->
<div id="rp" class="abs"></div>
<div class="abs" style="left:533px;top:479px;width:4px;height:20px;background:#1a5bc4;border-radius:0 2px 2px 0"></div>
<div class="h2" style="left:558px;top:477px">数据集信息</div>
<div class="abs" style="left:719px;top:469px;width:322px;height:40px;border:1px solid #dcdfe6;border-radius:4px;background:#fff"><span class="abs" style="left:12px;top:10.4px;font-size:17.5px;line-height:22px;color:#a8abb2;white-space:nowrap">输入数据内容</span></div>
<div class="tb" style="left:1052px;width:74px;background:#a0cfff;border-color:#a0cfff;color:#fff;font-weight:bold">搜索</div>
<div class="tb" style="left:1136px;width:74px;color:#a0cfff;border-color:#d9ecff">重置</div>
<div class="tb" style="left:1220px;width:75px;color:#a0cfff;border-color:#d9ecff">筛选</div>
<div class="tb" style="left:1305px;width:109px;color:#1a4aa0;border-color:#a0cfff">基本统计</div>
<div class="tb" style="left:1424px;width:127px;color:#a0cfff;border-color:#d9ecff">生成柱形图</div>
<div class="tb" style="left:1561px;width:110px;color:#a0cfff;border-color:#d9ecff">生成报告</div>
<!--TABLE START-->
<div class="abs" style="left:558px;top:534px;width:1112px;height:50px;background:#f5f7fa;border:1px solid #ebeef5"></div>
<div class="th" style="left:558px;top:534px;width:68px;height:50px;text-align:center;padding:0">序号</div>
<div class="th" style="left:626px;top:534px;width:151px;height:50px">Article DOI<i class="sort"></i></div>
<div class="th" style="left:777px;top:534px;width:155px;height:50px">Article Title<i class="sort"></i></div>
<div class="th" style="left:932px;top:534px;width:120px;height:50px">Journal<i class="sort"></i></div>
<div class="th" style="left:1052px;top:534px;width:198px;height:50px">Publication Type<i class="sort"></i></div>
<div class="th" style="left:1250px;top:534px;width:191px;height:50px">Document Type<i class="sort"></i></div>
<div class="th" style="left:1441px;top:534px;width:104px;height:50px">Authors<i class="sort"></i></div>
<div class="td" style="left:558px;top:584.0px;width:68px;height:51px;text-align:center;padding:0">1</div>
<div class="td" style="left:626px;top:584.0px;width:151px;height:51px;">10.1166/sa···</div>
<div class="td" style="left:777px;top:584.0px;width:155px;height:51px;">Effect of Exp···</div>
<div class="td" style="left:932px;top:584.0px;width:120px;height:51px;letter-spacing:-0.4px;">SCIENC···</div>
<div class="td" style="left:1052px;top:584.0px;width:198px;height:51px;">J</div>
<div class="td" style="left:1250px;top:584.0px;width:191px;height:51px;">Article</div>
<div class="td" style="left:1441px;top:584.0px;width:104px;height:51px;">An, Jaeh···</div>
<div class="tdf" style="top:584.0px;height:51px;"><svg width="22" height="16" viewBox="0 0 22 16"><path d="M1.2 8 C4 3 7.5 1.2 11 1.2 C14.5 1.2 18 3 20.8 8 C18 13 14.5 14.8 11 14.8 C7.5 14.8 4 13 1.2 8 Z" fill="none" stroke="#303133" stroke-width="1.35"/><circle cx="11" cy="8.3" r="2.6" fill="none" stroke="#303133" stroke-width="1.35"/></svg></div>
<div class="td" style="left:558px;top:635.0px;width:68px;height:52px;text-align:center;padding:0">2</div>
<div class="td" style="left:626px;top:635.0px;width:151px;height:52px;">10.1016/j.m···</div>
<div class="td" style="left:777px;top:635.0px;width:155px;height:52px;">Transient sol···</div>
<div class="td" style="left:932px;top:635.0px;width:120px;height:52px;letter-spacing:-0.4px;">MATERI···</div>
<div class="td" style="left:1052px;top:635.0px;width:198px;height:52px;">J</div>
<div class="td" style="left:1250px;top:635.0px;width:191px;height:52px;">Article</div>
<div class="td" style="left:1441px;top:635.0px;width:104px;height:52px;">Wang, Sh···</div>
<div class="tdf" style="top:635.0px;height:52px;"><svg width="22" height="16" viewBox="0 0 22 16"><path d="M1.2 8 C4 3 7.5 1.2 11 1.2 C14.5 1.2 18 3 20.8 8 C18 13 14.5 14.8 11 14.8 C7.5 14.8 4 13 1.2 8 Z" fill="none" stroke="#303133" stroke-width="1.35"/><circle cx="11" cy="8.3" r="2.6" fill="none" stroke="#303133" stroke-width="1.35"/></svg></div>
<div class="td" style="left:558px;top:687.0px;width:68px;height:53px;text-align:center;padding:0">3</div>
<div class="td" style="left:626px;top:687.0px;width:151px;height:53px;">10.1007/s11···</div>
<div class="td" style="left:777px;top:687.0px;width:155px;height:53px;">High Temper···</div>
<div class="td" style="left:932px;top:687.0px;width:120px;height:53px;letter-spacing:-0.4px;">METALL···</div>
<div class="td" style="left:1052px;top:687.0px;width:198px;height:53px;">J</div>
<div class="td" style="left:1250px;top:687.0px;width:191px;height:53px;">Article</div>
<div class="td" style="left:1441px;top:687.0px;width:104px;height:53px;">Texier, D···</div>
<div class="tdf" style="top:687.0px;height:53px;border-bottom-color:#fff;"><svg width="22" height="16" viewBox="0 0 22 16"><path d="M1.2 8 C4 3 7.5 1.2 11 1.2 C14.5 1.2 18 3 20.8 8 C18 13 14.5 14.8 11 14.8 C7.5 14.8 4 13 1.2 8 Z" fill="none" stroke="#303133" stroke-width="1.35"/><circle cx="11" cy="8.3" r="2.6" fill="none" stroke="#303133" stroke-width="1.35"/></svg></div>
<div class="td" style="left:558px;top:740.0px;width:68px;height:52px;text-align:center;padding:0">4</div>
<div class="td" style="left:626px;top:740.0px;width:151px;height:52px;">10.1063/5.0···</div>
<div class="td" style="left:777px;top:740.0px;width:155px;height:52px;">Composite C···</div>
<div class="td" style="left:932px;top:740.0px;width:120px;height:52px;letter-spacing:-0.4px;">PROCEE···</div>
<div class="td" style="left:1052px;top:740.0px;width:198px;height:52px;">C</div>
<div class="td" style="left:1250px;top:740.0px;width:191px;height:52px;">Proceedings Paper</div>
<div class="td" style="left:1441px;top:740.0px;width:104px;height:52px;">Matts, O. ···</div>
<div class="tdf" style="top:740.0px;height:52px;"><svg width="22" height="16" viewBox="0 0 22 16"><path d="M1.2 8 C4 3 7.5 1.2 11 1.2 C14.5 1.2 18 3 20.8 8 C18 13 14.5 14.8 11 14.8 C7.5 14.8 4 13 1.2 8 Z" fill="none" stroke="#303133" stroke-width="1.35"/><circle cx="11" cy="8.3" r="2.6" fill="none" stroke="#303133" stroke-width="1.35"/></svg></div>
<div class="td" style="left:558px;top:792.0px;width:68px;height:52px;text-align:center;padding:0">5</div>
<div class="td" style="left:626px;top:792.0px;width:151px;height:52px;">10.1063/5.0···</div>
<div class="td" style="left:777px;top:792.0px;width:155px;height:52px;">Structural, El···</div>
<div class="td" style="left:932px;top:792.0px;width:120px;height:52px;letter-spacing:-0.4px;">DAE SOL···</div>
<div class="td" style="left:1052px;top:792.0px;width:198px;height:52px;">C</div>
<div class="td" style="left:1250px;top:792.0px;width:191px;height:52px;">Proceedings Paper</div>
<div class="td" style="left:1441px;top:792.0px;width:104px;height:52px;">Rajpoot, ···</div>
<div class="tdf" style="top:792.0px;height:52px;"><svg width="22" height="16" viewBox="0 0 22 16"><path d="M1.2 8 C4 3 7.5 1.2 11 1.2 C14.5 1.2 18 3 20.8 8 C18 13 14.5 14.8 11 14.8 C7.5 14.8 4 13 1.2 8 Z" fill="none" stroke="#303133" stroke-width="1.35"/><circle cx="11" cy="8.3" r="2.6" fill="none" stroke="#303133" stroke-width="1.35"/></svg></div>
<div class="td" style="left:558px;top:844.0px;width:68px;height:53px;text-align:center;padding:0">6</div>
<div class="td" style="left:626px;top:844.0px;width:151px;height:53px;">10.3390/ma···</div>
<div class="td" style="left:777px;top:844.0px;width:155px;height:53px;">Rejuvenatio···</div>
<div class="td" style="left:932px;top:844.0px;width:120px;height:53px;letter-spacing:-0.4px;">MATERI···</div>
<div class="td" style="left:1052px;top:844.0px;width:198px;height:53px;">J</div>
<div class="td" style="left:1250px;top:844.0px;width:191px;height:53px;">Article</div>
<div class="td" style="left:1441px;top:844.0px;width:104px;height:53px;">Lou, Yan;···</div>
<div class="tdf" style="top:844.0px;height:53px;"><svg width="22" height="16" viewBox="0 0 22 16"><path d="M1.2 8 C4 3 7.5 1.2 11 1.2 C14.5 1.2 18 3 20.8 8 C18 13 14.5 14.8 11 14.8 C7.5 14.8 4 13 1.2 8 Z" fill="none" stroke="#303133" stroke-width="1.35"/><circle cx="11" cy="8.3" r="2.6" fill="none" stroke="#303133" stroke-width="1.35"/></svg></div>
<div class="td" style="left:558px;top:897.0px;width:68px;height:52px;text-align:center;padding:0">7</div>
<div class="td" style="left:626px;top:897.0px;width:151px;height:52px;">10.1016/j.su···</div>
<div class="td" style="left:777px;top:897.0px;width:155px;height:52px;">Effect of lase···</div>
<div class="td" style="left:932px;top:897.0px;width:120px;height:52px;letter-spacing:-0.4px;">SURFAC···</div>
<div class="td" style="left:1052px;top:897.0px;width:198px;height:52px;">J</div>
<div class="td" style="left:1250px;top:897.0px;width:191px;height:52px;">Article</div>
<div class="td" style="left:1441px;top:897.0px;width:104px;height:52px;">Erdogan, ···</div>
<div class="tdf" style="top:897.0px;height:52px;"><svg width="22" height="16" viewBox="0 0 22 16"><path d="M1.2 8 C4 3 7.5 1.2 11 1.2 C14.5 1.2 18 3 20.8 8 C18 13 14.5 14.8 11 14.8 C7.5 14.8 4 13 1.2 8 Z" fill="none" stroke="#303133" stroke-width="1.35"/><circle cx="11" cy="8.3" r="2.6" fill="none" stroke="#303133" stroke-width="1.35"/></svg></div>
<!--TABLE END-->
<div class="abs" style="left:1530px;top:534px;width:15px;height:400px;background:linear-gradient(to right,rgba(0,0,0,0),rgba(0,0,0,0.06))"></div>
<div class="abs" style="left:1545px;top:534px;width:125px;height:50px;background:#f5f7fa;border-top:1px solid #ebeef5;border-bottom:1px solid #ebeef5;border-right:1px solid #ebeef5;text-align:center;font-size:17.5px;font-weight:bold;color:#909399;line-height:48px">操作</div>

<!-- SCROLLBAR -->
<div id="sb" class="abs"><svg class="abs" style="left:3.5px;top:11px" width="12" height="9" viewBox="0 0 12 9"><path d="M1 8 L6 1.5 L11 8 Z" fill="#8c8c8c" stroke="#8c8c8c" stroke-width="1.2" stroke-linejoin="round"/></svg><div class="abs" style="left:4px;top:105px;width:11px;height:477px;border-radius:6px;background:#8c8c8c"></div><svg class="abs" style="left:3.5px;top:905px" width="12" height="10" viewBox="0 0 12 9"><path d="M1 1 L6 7.5 L11 1 Z" fill="#8c8c8c" stroke="#8c8c8c" stroke-width="1.2" stroke-linejoin="round"/></svg></div>
</body>
</html>
